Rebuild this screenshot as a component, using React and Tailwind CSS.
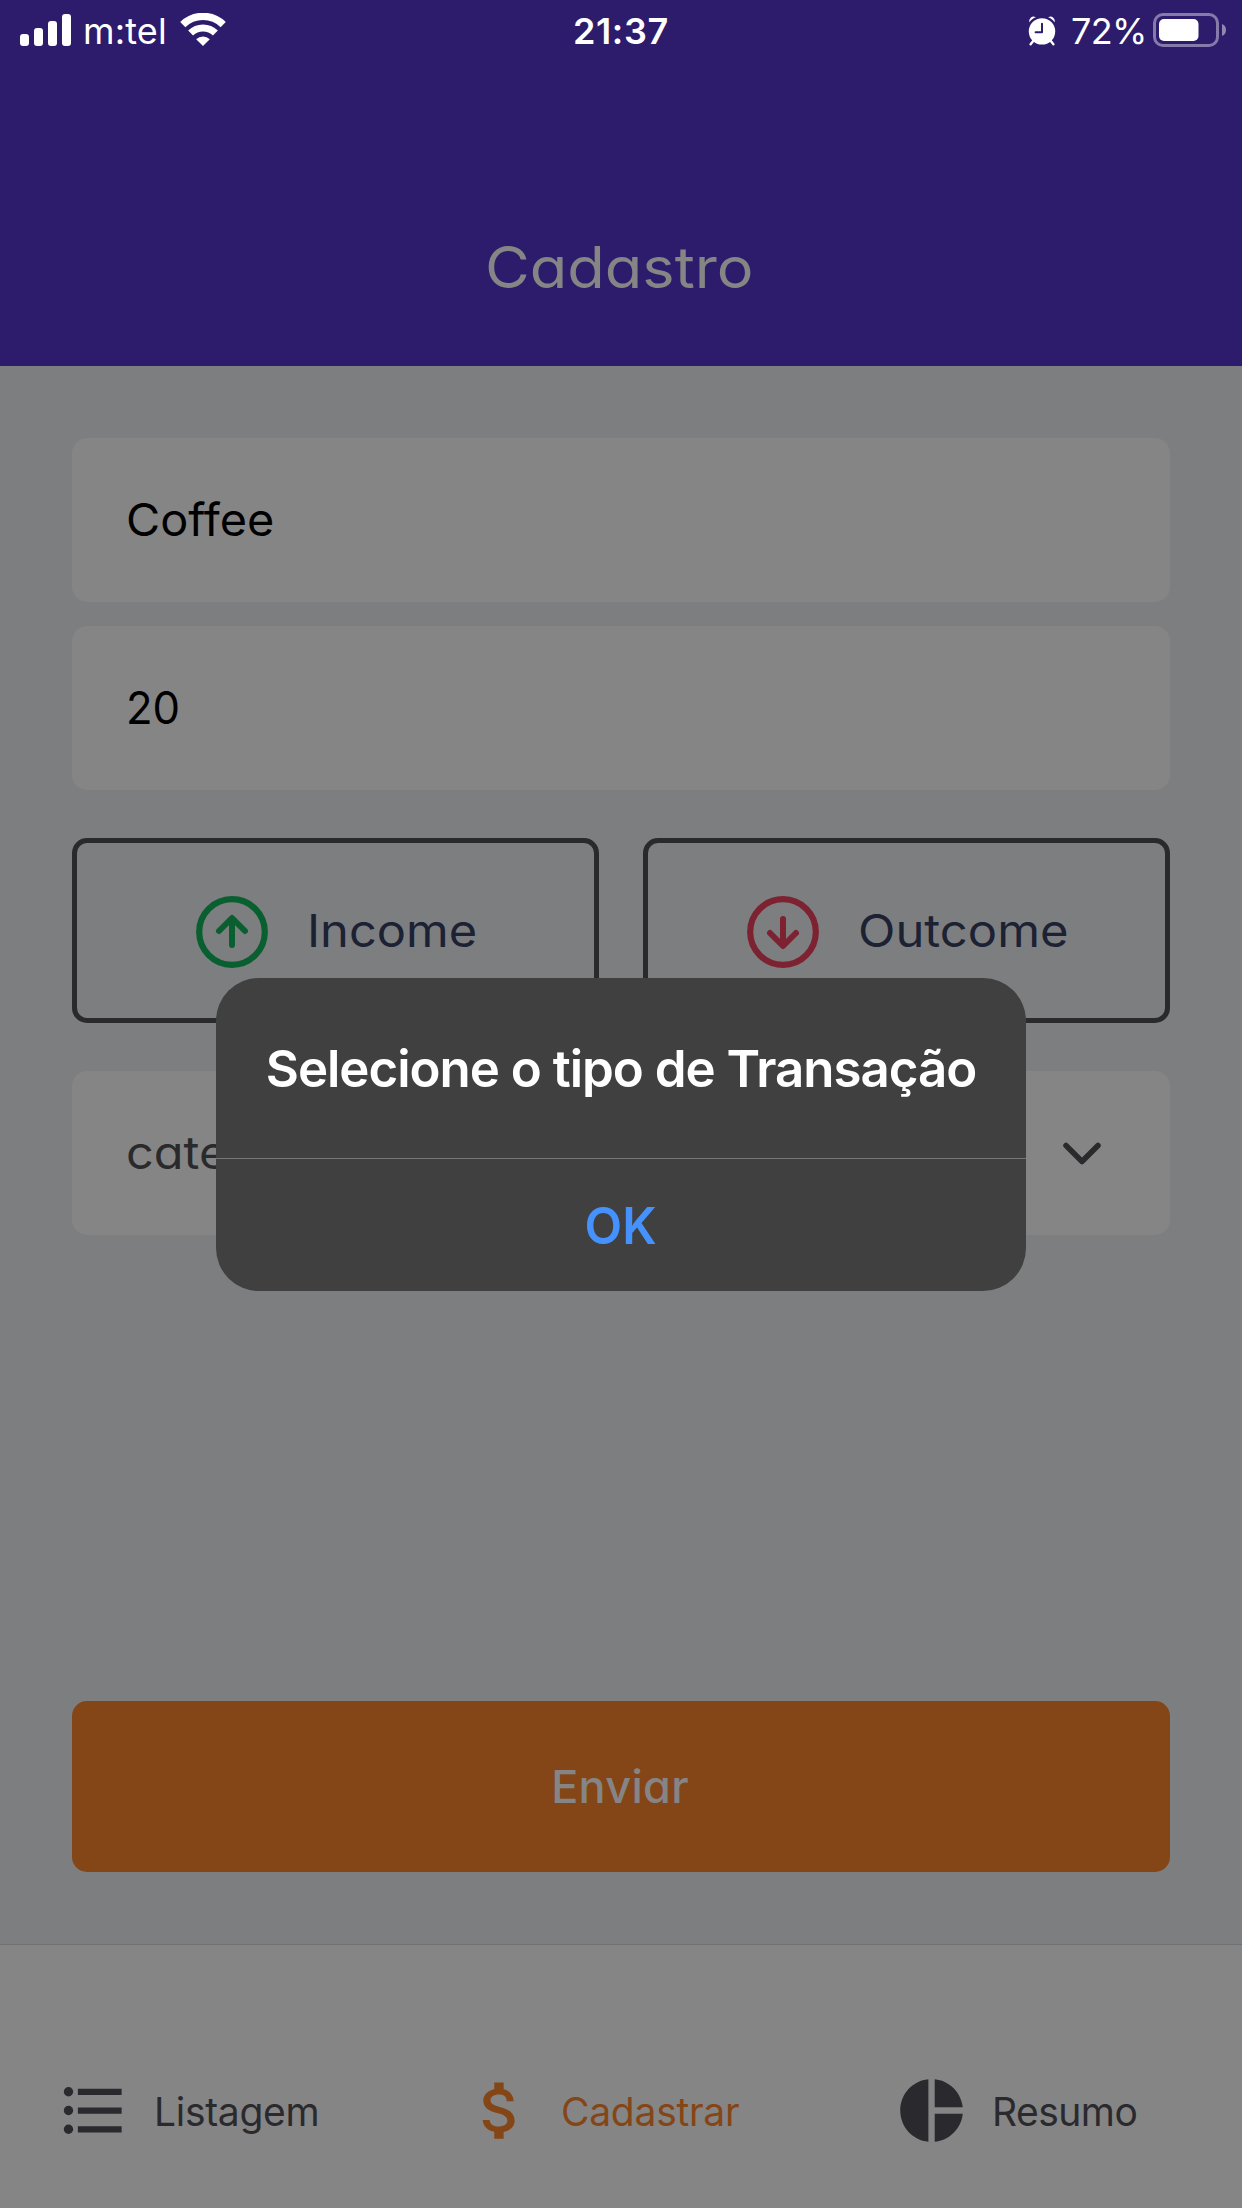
function SignalBars() {
  return (
    <div className="flex h-[46px] items-end gap-[5px] text-white">
      <span className="h-3 w-[9px] rounded-[3px] bg-white" />
      <span className="h-[18px] w-[9px] rounded-[3px] bg-white" />
      <span className="h-[25px] w-[9px] rounded-[3px] bg-white" />
      <span className="h-8 w-[9px] rounded-[3px] bg-white" />
    </div>
  );
}

function WifiIcon() {
  return (
    <svg className="h-[33px] w-[46px]" viewBox="0 0 46 33" fill="none" stroke="#fff">
      <path d="M2.8 11.6A29 29 0 0 1 43.2 11.6" strokeWidth="7.4" />
      <path d="M10.6 20A17.6 17.6 0 0 1 35.4 20" strokeWidth="7" />
      <path d="M23 33L16.2 26.2A9.8 9.8 0 0 1 29.8 26.2Z" fill="#fff" stroke="none" />
    </svg>
  );
}

function AlarmIcon() {
  return (
    <svg className="h-[30px] w-7" viewBox="0 0 28 30">
      <path d="M5.6 24.5L2.6 28.2M22.4 24.5L25.4 28.2" stroke="#fff" strokeWidth="2.4" strokeLinecap="round" />
      <path d="M1.6 6.4A4.2 4.2 0 0 1 7.6 1.2L9 2.4L2.2 7.6Z" fill="#fff" />
      <path d="M26.4 6.4A4.2 4.2 0 0 0 20.4 1.2L19 2.4L25.8 7.6Z" fill="#fff" />
      <path d="M1.2 8.4A15 15 0 0 1 26.8 8.4" fill="none" stroke="#2d1b6c" strokeWidth="2.4" />
      <circle cx="14" cy="15.4" r="13.2" fill="#fff" />
      <path d="M14 7.8V16.3H7.6" fill="none" stroke="#2d1b6c" strokeWidth="2" strokeLinecap="round" strokeLinejoin="round" />
    </svg>
  );
}

function BatteryIcon() {
  return (
    <svg className="h-[34px] w-[74px]" viewBox="0 0 74 34">
      <rect x="1.5" y="1.5" width="63" height="31" rx="8.5" fill="none" stroke="#fff" strokeOpacity=".42" strokeWidth="3" />
      <rect x="6" y="6" width="39.5" height="22" rx="5" fill="#fff" />
      <path d="M69 11Q73 12.6 73 17Q73 21.4 69 23Z" fill="#fff" fillOpacity=".48" />
    </svg>
  );
}

function StatusBar() {
  return (
    <div className="flex h-[62px] items-center text-[36px] leading-none text-white">
      <div className="flex w-[573px] items-center pl-5">
        <div className="flex h-[62px] items-start">
          <SignalBars />
        </div>
        <span className="ml-3 tracking-[0.17px]">m:tel</span>
        <div className="mb-[3px] ml-[13px]">
          <WifiIcon />
        </div>
      </div>
      <span className="w-[455px] font-semibold tracking-[0.6px]">21:37</span>
      <AlarmIcon />
      <span className="ml-[15px] w-[82px] tracking-[-0.66px]">72%</span>
      <div className="mb-[2px]">
        <BatteryIcon />
      </div>
    </div>
  );
}

function CircleArrow({ down }) {
  return (
    <svg
      className={down ? 'mt-[2px] h-[72px] w-[72px] rotate-180 text-[#7d2231]' : 'mt-[2px] h-[72px] w-[72px] text-[#095f30]'}
      viewBox="0 0 72 72"
      fill="none"
      stroke="currentColor"
      strokeLinecap="round"
      strokeLinejoin="round"
    >
      <circle cx="36" cy="36" r="32.8" strokeWidth="6.2" />
      <path d="M23 35L36 22L49 35M36 23V49" strokeWidth="6" />
    </svg>
  );
}

function Field({ children }) {
  return (
    <div className="flex h-[164px] items-center rounded-[15px] bg-[#858585] pl-[54px] text-[45px] leading-none text-black">
      {children}
    </div>
  );
}

function Header() {
  return (
    <header className="h-[366px] bg-[#2d1b6c]">
      <StatusBar />
      <h1 className="mt-[170px] ml-[485px] w-fit origin-left scale-x-[1.075] text-[57px] leading-[72px] text-[#858585]">Cadastro</h1>
    </header>
  );
}

function TabBar() {
  return (
    <nav className="flex h-[264px] items-center border-t border-[#707071] bg-[#858585] pt-[69px] text-[39px] leading-none text-[#2a2a2e] [font-feature-settings:normal]">
      <div className="flex w-[463px] items-center pl-14">
        <svg className="mb-[2px] h-[75px] w-[75px]" viewBox="0 0 24 24" fill="currentColor">
          <path d="M7 5v2h14V5H7zm0 14h14v-2H7v2zm0-6h14v-2H7v2z" />
          <circle cx="4" cy="6" r="1.5" />
          <circle cx="4" cy="12" r="1.5" />
          <circle cx="4" cy="18" r="1.5" />
        </svg>
        <span className="ml-[23px] tracking-[-0.3px]">Listagem</span>
      </div>
      <div className="flex w-[431px] items-center text-[#854617]">
        <svg className="mb-[2px] h-[75px] w-[75px]" viewBox="0 0 24 24" fill="currentColor">
          <path d="M11.8 10.9c-2.27-.59-3-1.2-3-2.15 0-1.09 1.01-1.85 2.7-1.85 1.78 0 2.44.85 2.5 2.1h2.21c-.07-1.72-1.12-3.3-3.21-3.81V3h-3v2.16c-1.94.42-3.5 1.68-3.5 3.61 0 2.31 1.91 3.46 4.7 4.13 2.5.6 3 1.48 3 2.41 0 .69-.49 1.79-2.7 1.79-2.06 0-2.87-.92-2.98-2.1h-2.2c.12 2.19 1.76 3.42 3.68 3.83V21h3v-2.15c1.95-.37 3.5-1.5 3.5-3.55 0-2.84-2.43-3.81-4.7-4.4z" />
        </svg>
        <span className="ml-[23px] tracking-[-0.26px]">Cadastrar</span>
      </div>
      <div className="flex items-center">
        <svg className="mb-[2px] h-[75px] w-[75px]" viewBox="0 0 24 24" fill="currentColor">
          <path d="M11 2v20c-5.07-.5-9-4.79-9-10s3.93-9.5 9-10zm2.03 0v8.99H22c-.47-4.74-4.24-8.52-8.97-8.99zm0 11.01V22c4.74-.47 8.5-4.25 8.97-8.99h-8.97z" />
        </svg>
        <span className="ml-[23px] tracking-[-0.51px]">Resumo</span>
      </div>
    </nav>
  );
}

function AlertDialog() {
  return (
    <div className="absolute top-[978px] left-[216px] flex h-[313px] w-[810px] flex-col overflow-hidden rounded-[43px] bg-[#3f403f] font-semibold leading-none [font-feature-settings:normal]">
      <h2 className="flex h-[180px] items-center justify-center whitespace-nowrap text-[51px] tracking-[-1.01px] text-white">
        Selecione o tipo de Transação
      </h2>
      <button className="flex flex-1 items-center justify-center border-t border-[#777] pt-px text-[51px] text-[#4592ff]">
        <span className="scale-x-[0.96]">OK</span>
      </button>
    </div>
  );
}

export default function App() {
  return (
    <div className="relative flex h-[2208px] w-[1242px] flex-col overflow-hidden bg-[#7d7e80] font-['Inter','Liberation_Sans',sans-serif] [font-feature-settings:'cv11']">
      <Header />
      <main className="flex flex-1 flex-col px-[72px] pt-[72px] pb-[72px]">
        <div className="flex flex-col gap-6">
          <Field>
            <span className="mb-[2px] origin-left scale-x-[1.04]">Coffee</span>
          </Field>
          <Field>
            <span className="mb-[2px] origin-left scale-x-[0.97]">20</span>
          </Field>
        </div>
        <div className="mt-12 flex h-[185px] gap-11">
          <div className="flex w-[527px] items-center rounded-[15px] border-5 border-[#2a2a2d] pl-[119px] text-[45px] leading-none text-[#1c2133]">
            <CircleArrow />
            <span className="ml-[39px] origin-left scale-x-[1.083]">Income</span>
          </div>
          <div className="flex w-[527px] items-center rounded-[15px] border-5 border-[#2a2a2d] pl-[99px] text-[45px] leading-none text-[#1c2133]">
            <CircleArrow down />
            <span className="ml-[39px] origin-left scale-x-[1.087]">Outcome</span>
          </div>
        </div>
        <div className="mt-12">
          <Field>
            <span className="mb-[2px] origin-left scale-x-[1.08] text-[#2a2a2d]">categoria</span>
            <svg className="mr-[66px] ml-auto h-11 w-11" viewBox="0 0 44 44" fill="none" stroke="#2a2a2d" strokeWidth="5.5" strokeLinecap="round" strokeLinejoin="round">
              <path d="M6 14.5L22 30.5L38 14.5" />
            </svg>
          </Field>
        </div>
        <button className="mt-auto flex h-[171px] items-center justify-center rounded-[15px] bg-[#854617] pr-[2px] text-[45px] leading-none font-medium tracking-[0.3px] text-[#858585]">
          Enviar
        </button>
      </main>
      <TabBar />
      <AlertDialog />
    </div>
  );
}
